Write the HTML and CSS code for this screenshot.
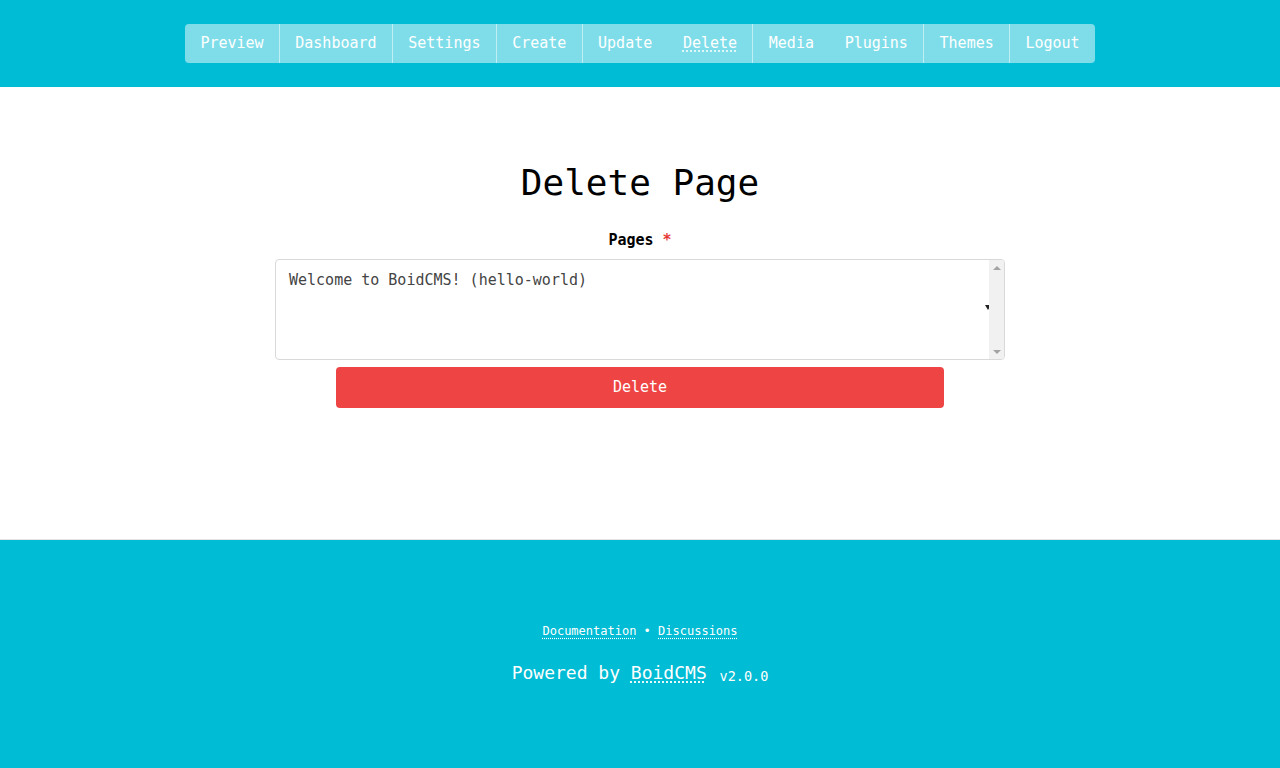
FILE: index.html
```html
<!DOCTYPE html>
<html lang="en">
<head>
<meta charset="utf-8">
<title>Delete Page</title>
<link rel="stylesheet" href="styles.css">
</head>
<body>
<header class="top">
  <nav class="nav">
    <a class="item" href="#">Preview</a>
    <a class="item sep" href="#">Dashboard</a>
    <a class="item sep" href="#">Settings</a>
    <a class="item sep" href="#">Create</a>
    <a class="item sep" href="#">Update</a>
    <a class="item active" href="#">Delete</a>
    <a class="item sep" href="#">Media</a>
    <a class="item" href="#">Plugins</a>
    <a class="item sep" href="#">Themes</a>
    <a class="item sep" href="#">Logout</a>
  </nav>
</header>
<main class="main">
  <h1 class="title">Delete Page</h1>
  <div class="label">Pages <span class="req">*</span></div>
  <div class="select">
    <div class="options">
      <div class="option">Welcome to BoidCMS! (hello-world)</div>
    </div>
    <span class="caret"></span>
    <div class="scrollbar">
      <span class="arrow up"></span>
      <span class="arrow down"></span>
    </div>
  </div>
  <button class="btn" type="button">Delete</button>
</main>
<footer class="foot">
  <p class="links"><a href="#">Documentation</a> • <a href="#">Discussions</a></p>
  <p class="powered">Powered by <a href="#">BoidCMS</a> <small class="ver">v2.0.0</small></p>
</footer>
</body>
</html>
```
FILE: styles.css
```css
html, body {
  margin: 0;
  padding: 0;
}
body {
  font-family: "DejaVu Sans Mono", monospace;
  font-size: 15px;
  color: #000;
  background: #fff;
}
.top {
  background: #00bcd4;
  height: 87px;
  box-sizing: border-box;
  padding-top: 24px;
  display: flex;
  justify-content: center;
}
.nav {
  display: flex;
  height: 39px;
  background: #7fdde9;
  border-radius: 4px;
  align-items: stretch;
}
.item {
  display: flex;
  align-items: center;
  padding: 0 15.35px;
  color: #fff;
  text-decoration: none;
  line-height: 1;
  padding-bottom: 1px;
}
.item.sep {
  border-left: 1px solid #bfeef4;
}
.item.active {
  text-decoration: underline dotted;
  text-underline-offset: 3px;
}
.main {
  height: 452px;
  box-sizing: border-box;
  padding-top: 74px;
  display: flex;
  flex-direction: column;
  align-items: center;
}
.title {
  margin: 0;
  font-size: 36px;
  font-weight: normal;
  line-height: 43px;
  height: 43px;
}
.label {
  margin-top: 25px;
  font-weight: bold;
  line-height: 22px;
}
.req {
  color: #e53935;
}
.select {
  margin-top: 8px;
  width: 730px;
  height: 101px;
  box-sizing: border-box;
  border: 1px solid #d9d9d9;
  border-radius: 4px;
  display: flex;
  position: relative;
  overflow: hidden;
  background: #fff;
}
.options {
  flex: 1;
  padding: 11px 13px;
}
.option {
  color: #444;
  line-height: 19px;
}
.caret {
  position: absolute;
  right: 13px;
  top: 45px;
  width: 0;
  height: 0;
  border-left: 3px solid transparent;
  border-right: 3px solid transparent;
  border-top: 5px solid #222;
}
.scrollbar {
  width: 15px;
  background: #f1f1f1;
  display: flex;
  flex-direction: column;
  justify-content: space-between;
  align-items: center;
  padding: 6px 0 5px;
  position: relative;
  z-index: 1;
}
.arrow {
  width: 0;
  height: 0;
  border-left: 4px solid transparent;
  border-right: 4px solid transparent;
}
.arrow.up {
  border-bottom: 4px solid #a3a3a3;
}
.arrow.down {
  border-top: 4px solid #a3a3a3;
}
.btn {
  margin-top: 7px;
  width: 608px;
  height: 41px;
  border: 0;
  border-radius: 4px;
  background: #ef4444;
  color: #fff;
  font-family: "DejaVu Sans Mono", monospace;
  font-size: 15px;
  padding: 0 0 2px;
}
.foot {
  background: #00bcd4;
  border-top: 1px solid #e2e2e2;
  height: 229px;
  box-sizing: border-box;
  display: flex;
  flex-direction: column;
  align-items: center;
  color: #fff;
  padding-top: 82px;
}
.foot p {
  margin: 0;
}
.foot a {
  color: #fff;
  text-decoration: underline dotted;
  text-underline-offset: 3px;
}
.links {
  font-size: 12px;
  line-height: 18px;
}
.powered {
  margin-top: 21px !important;
  font-size: 18px;
  line-height: 24px;
}
.ver {
  font-size: 13.5px;
  margin-left: 2px;
  position: relative;
  top: 2px;
}
```
